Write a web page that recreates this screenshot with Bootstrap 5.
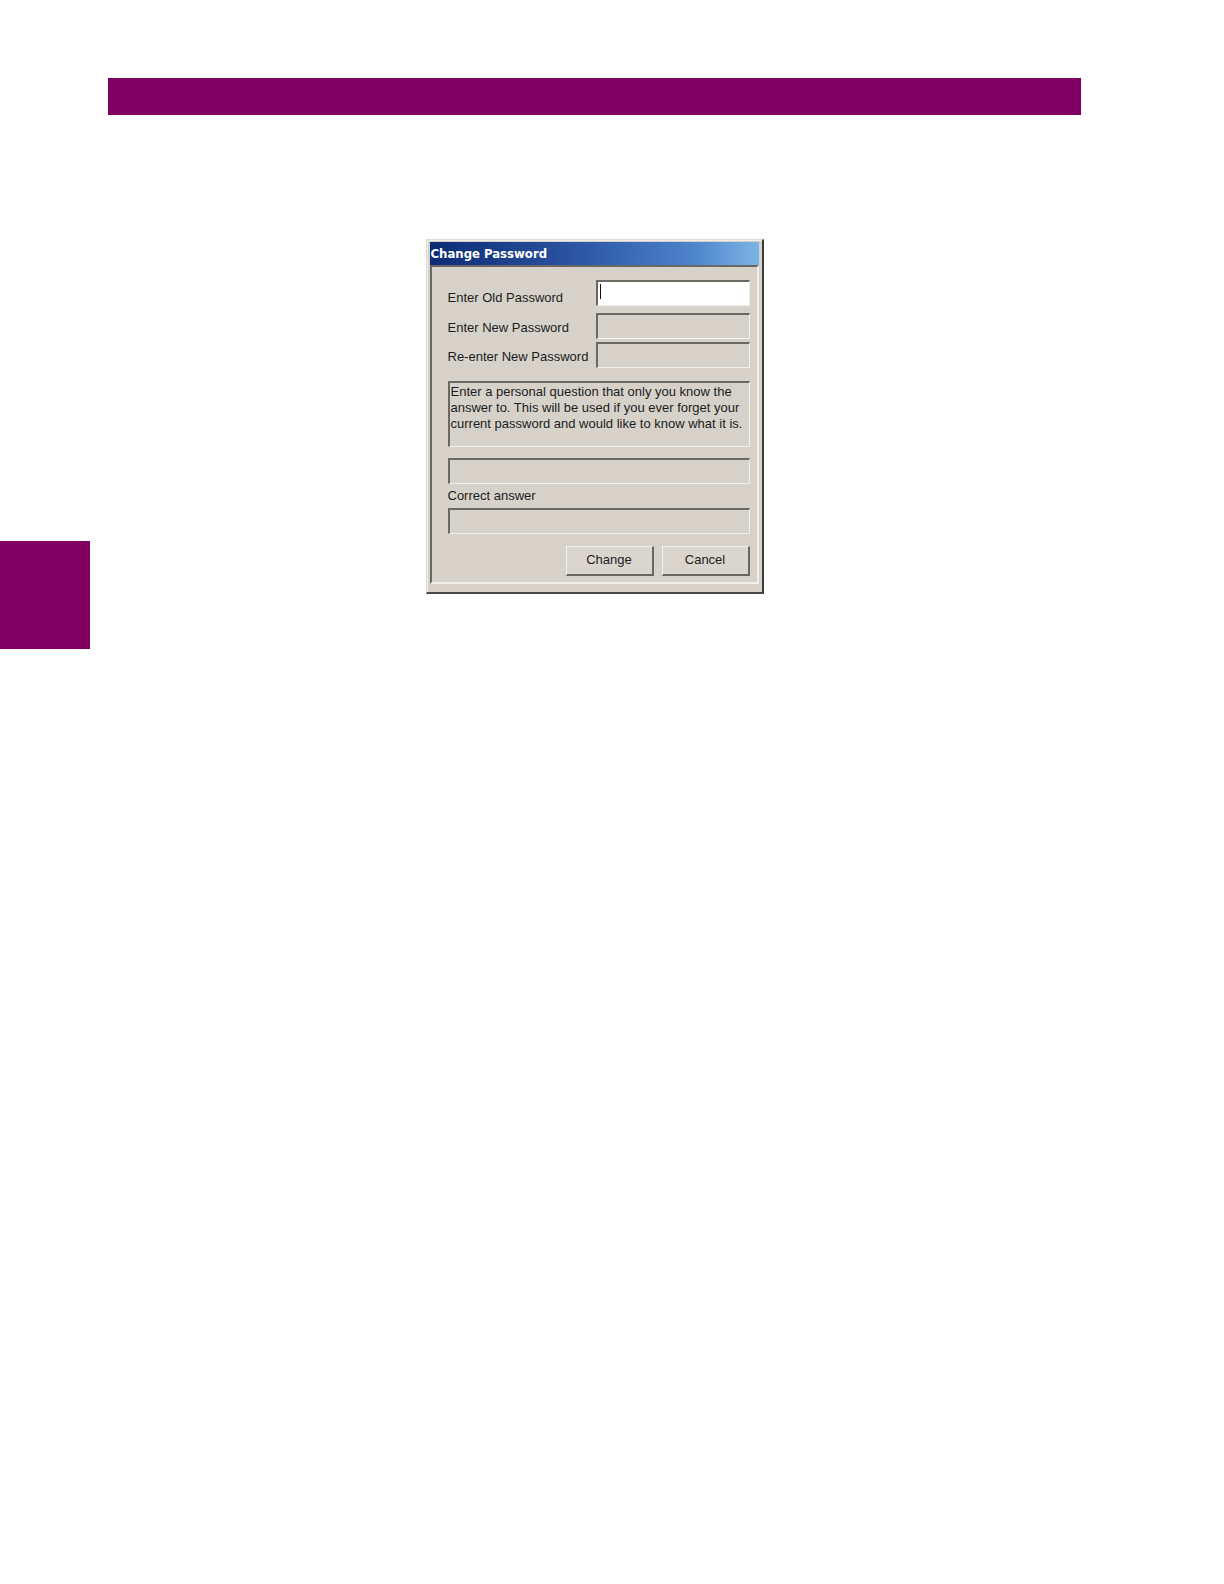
<!DOCTYPE html>
<html lang="en">
<head>
<meta charset="utf-8">
<meta name="viewport" content="width=device-width, initial-scale=1">
<title>Change Password</title>
<link rel="stylesheet" href="https://cdn.jsdelivr.net/npm/bootstrap@5.3.0/dist/css/bootstrap.min.css">
<style>
  :root { --plum: #800062; --face: #d6d2ca; --lit: #f1efea; --shade: #6b6862; }
  body { background: #fff; color: #1c1c1c; font-family: "Liberation Sans", Arial, sans-serif; font-size: 13px; line-height: 16px; }
  .margin-strip { width: 90px; padding-top: 541px; }
  .chapter-tab { height: 108px; background: var(--plum); }
  .sheet { padding: 78px 143px 0 18px; }
  .title-band { height: 37px; background: var(--plum); margin-bottom: 124px; }
  .dialog-window { width: 338px; max-width: 100%; background: var(--face); border: solid; border-width: 1px 2px 2px 1px; border-color: #dedbd4 #3b3c3a #4a4945 #dedbd4; padding: 2px 3px 8px; box-shadow: inset 1px 1px #efede8; }
  .dialog-caption { height: 23px; padding-left: 1px; background: linear-gradient(90deg, #0d2b75, #2c55a3 45%, #4d84cc 80%, #7db4e6); color: #fff; font: bold 13px/23px "DejaVu Sans Condensed", "DejaVu Sans", sans-serif; }
  .sunken { border: solid; border-width: 2px 1px 1px 2px; border-color: var(--shade) var(--lit) var(--lit) var(--shade); border-radius: 0; background: transparent; }
  .dialog-panel { padding: 13px 7px 6px 16px; border-right-width: 2px; border-bottom-width: 2px; }
  .entry { height: 26px; padding: 0 4px; outline: 0; }
  .entry-short { width: 154px; }
  .entry-active { background: linear-gradient(#111, #111) 2px 2px / 1px 15px no-repeat, #fff; }
  .secret-rows { display: grid; row-gap: 3px; }
  .secret-rows label { padding-top: 3px; }
  .secret-rows > :first-child { margin-bottom: 4px; }
  .hint-box { height: 66px; margin: 13px 0 11px; padding: 1px; white-space: nowrap; }
  .answer-label { padding: 4px 0; }
  .push { width: 88px; height: 30px; padding: 0 0 2px; color: #1c1c1c; background: #dad6ce; border: solid; border-width: 1px 2px 2px 1px; border-color: var(--lit) var(--shade) var(--shade) var(--lit); }
</style>
</head>
<body>
<div class="d-flex">
  <aside class="margin-strip flex-shrink-0"><div class="chapter-tab"></div></aside>
  <div class="sheet flex-grow-1">
    <header class="title-band"></header>
    <main>
      <form class="dialog-window mx-auto">
        <h1 class="dialog-caption m-0">Change Password</h1>
        <div class="dialog-panel sunken">
          <div class="secret-rows">
            <div class="d-flex justify-content-between align-items-end">
              <label for="oldPass">Enter Old Password</label>
              <input class="entry entry-short sunken entry-active" type="password" id="oldPass">
            </div>
            <div class="d-flex justify-content-between align-items-center">
              <label for="newPass">Enter New Password</label>
              <input class="entry entry-short sunken" type="password" id="newPass">
            </div>
            <div class="d-flex justify-content-between align-items-center">
              <label for="againPass">Re-enter New Password</label>
              <input class="entry entry-short sunken" type="password" id="againPass">
            </div>
          </div>
          <div class="hint-box sunken" id="hint">Enter a personal question that only you know the<br>answer to. This will be used if you ever forget your<br>current password and would like to know what it is.</div>
          <input class="entry sunken w-100 d-block" type="text" id="question" aria-labelledby="hint">
          <label class="answer-label d-block" for="answer">Correct answer</label>
          <input class="entry sunken w-100 d-block" type="text" id="answer">
          <div class="d-flex justify-content-end gap-2 mt-2 pt-1">
            <button class="push" type="submit">Change</button>
            <button class="push" type="button">Cancel</button>
          </div>
        </div>
      </form>
    </main>
  </div>
</div>
<script src="https://cdn.jsdelivr.net/npm/bootstrap@5.3.0/dist/js/bootstrap.bundle.min.js"></script>
</body>
</html>
